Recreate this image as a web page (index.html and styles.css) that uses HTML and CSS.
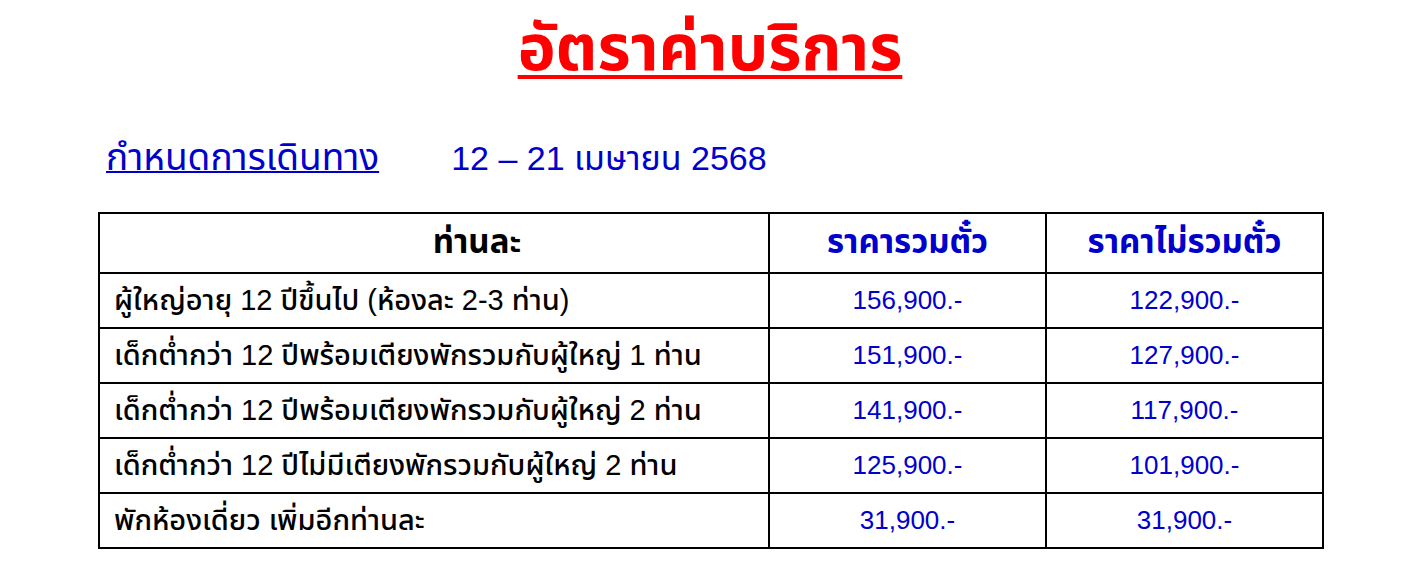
FILE: index.html
```html
<!DOCTYPE html>
<html lang="th">
<head>
<meta charset="utf-8">
<title>อัตราค่าบริการ</title>
<link rel="stylesheet" href="styles.css">
</head>
<body>
<div class="page">
  <h1 class="title">อัตราค่าบริการ</h1>
  <div class="trip">
    <span class="trip-label">กำหนดการเดินทาง</span>
    <span class="trip-date">12 – 21 เมษายน 2568</span>
  </div>
  <table class="rates">
    <colgroup>
      <col class="col-desc">
      <col class="col-price">
      <col class="col-price">
    </colgroup>
    <thead>
      <tr>
        <th class="head-desc">ท่านละ</th>
        <th class="head-price">ราคารวมตั๋ว</th>
        <th class="head-price">ราคาไม่รวมตั๋ว</th>
      </tr>
    </thead>
    <tbody>
      <tr>
        <td class="desc">ผู้ใหญ่อายุ 12 ปีขึ้นไป (ห้องละ 2-3 ท่าน)</td>
        <td class="price">156,900.-</td>
        <td class="price">122,900.-</td>
      </tr>
      <tr>
        <td class="desc">เด็กต่ำกว่า 12 ปีพร้อมเตียงพักรวมกับผู้ใหญ่ 1 ท่าน</td>
        <td class="price">151,900.-</td>
        <td class="price">127,900.-</td>
      </tr>
      <tr>
        <td class="desc">เด็กต่ำกว่า 12 ปีพร้อมเตียงพักรวมกับผู้ใหญ่ 2 ท่าน</td>
        <td class="price">141,900.-</td>
        <td class="price">117,900.-</td>
      </tr>
      <tr>
        <td class="desc">เด็กต่ำกว่า 12 ปีไม่มีเตียงพักรวมกับผู้ใหญ่ 2 ท่าน</td>
        <td class="price">125,900.-</td>
        <td class="price">101,900.-</td>
      </tr>
      <tr>
        <td class="desc">พักห้องเดี่ยว เพิ่มอีกท่านละ</td>
        <td class="price">31,900.-</td>
        <td class="price">31,900.-</td>
      </tr>
    </tbody>
  </table>
</div>
</body>
</html>
```
FILE: styles.css
```css
html, body {
  margin: 0;
  padding: 0;
  background: #ffffff;
}
body {
  font-family: "Liberation Sans", "Noto Sans Thai", "Noto Sans", sans-serif;
  color: #000000;
}
.page {
  padding: 8px 0 0 98px;
  width: 1224px;
}
.title {
  margin: 0;
  text-align: center;
  color: #ff0000;
  font-size: 64px;
  font-weight: bold;
  line-height: 80px;
  text-decoration: underline;
  text-decoration-thickness: 4px;
  text-underline-offset: 5px;
}
.trip {
  display: flex;
  align-items: baseline;
  gap: 72px;
  margin-top: 48px;
  padding-left: 8px;
  color: #0000cc;
  line-height: 44px;
}
.trip-label {
  font-size: 37px;
  text-decoration: underline;
  text-decoration-thickness: 2px;
}
.trip-date {
  font-size: 34px;
}
.rates {
  margin-top: 32px;
  width: 1224px;
  border-collapse: collapse;
  table-layout: fixed;
}
.col-desc {
  width: 670px;
}
.col-price {
  width: 277px;
}
.rates th, .rates td {
  border: 2px solid #000000;
  padding: 0 12px;
}
.rates th {
  height: 58px;
  font-size: 33px;
  font-weight: bold;
  text-align: center;
}
.rates .head-desc {
  padding-left: 98px;
}
.head-price {
  color: #0000cc;
}
.rates td {
  height: 53px;
  vertical-align: middle;
}
.rates .desc {
  text-align: left;
  padding-left: 14px;
  font-size: 29px;
  font-weight: 500;
}
.price {
  text-align: center;
  font-size: 26px;
  color: #0000cc;
}
```
